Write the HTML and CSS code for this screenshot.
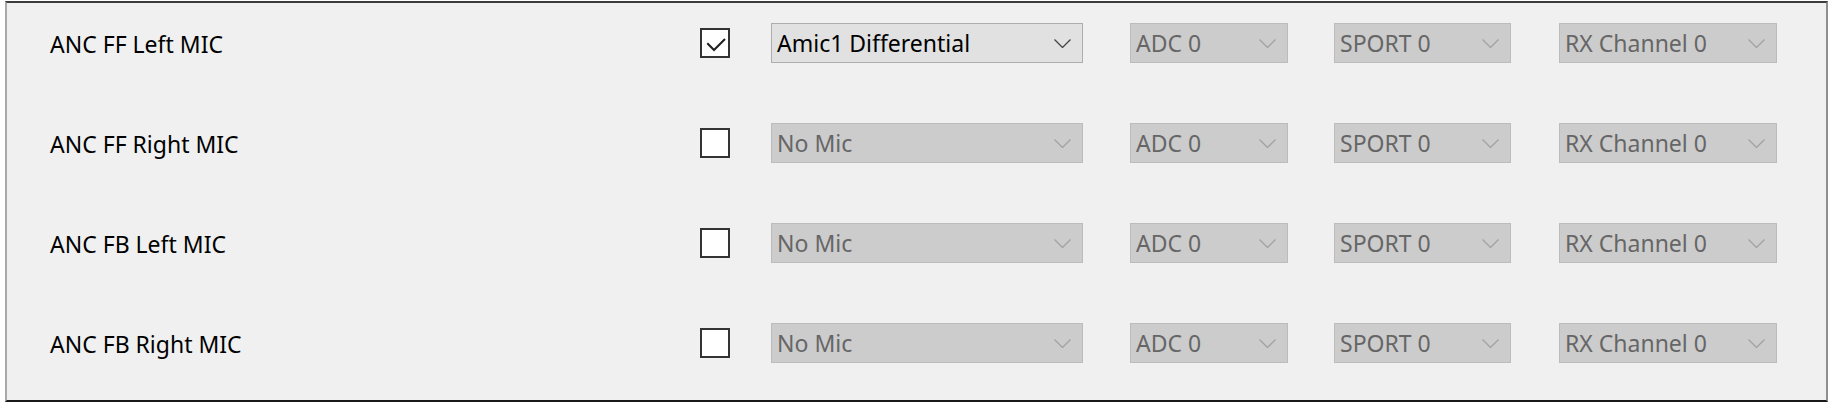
FILE: index.html
```html
<!DOCTYPE html>
<html>
<head>
<meta charset="utf-8">
<link rel="stylesheet" href="styles.css">
</head>
<body>
<div class="frame">
  <div class="row">
    <div class="label">ANC FF Left MIC</div>
    <div class="check on"><svg viewBox="0 0 26 26" width="26" height="26"><polyline points="5.3,13.3 12,20 23,9" fill="none" stroke="#1e1e1e" stroke-width="2"/></svg></div>
    <div class="combo w1 enabled"><span>Amic1 Differential</span><svg class="chev" viewBox="0 0 17 9" width="17" height="9"><polyline points="0.5,0.5 8.5,8.5 16.5,0.5" fill="none" stroke-width="1.3"/></svg></div>
    <div class="combo w2"><span>ADC 0</span><svg class="chev" viewBox="0 0 17 9" width="17" height="9"><polyline points="0.5,0.5 8.5,8.5 16.5,0.5" fill="none" stroke-width="1.3"/></svg></div>
    <div class="combo w3"><span>SPORT 0</span><svg class="chev" viewBox="0 0 17 9" width="17" height="9"><polyline points="0.5,0.5 8.5,8.5 16.5,0.5" fill="none" stroke-width="1.3"/></svg></div>
    <div class="combo w4"><span>RX Channel 0</span><svg class="chev" viewBox="0 0 17 9" width="17" height="9"><polyline points="0.5,0.5 8.5,8.5 16.5,0.5" fill="none" stroke-width="1.3"/></svg></div>
  </div>
  <div class="row">
    <div class="label">ANC FF Right MIC</div>
    <div class="check"></div>
    <div class="combo w1"><span>No Mic</span><svg class="chev" viewBox="0 0 17 9" width="17" height="9"><polyline points="0.5,0.5 8.5,8.5 16.5,0.5" fill="none" stroke-width="1.3"/></svg></div>
    <div class="combo w2"><span>ADC 0</span><svg class="chev" viewBox="0 0 17 9" width="17" height="9"><polyline points="0.5,0.5 8.5,8.5 16.5,0.5" fill="none" stroke-width="1.3"/></svg></div>
    <div class="combo w3"><span>SPORT 0</span><svg class="chev" viewBox="0 0 17 9" width="17" height="9"><polyline points="0.5,0.5 8.5,8.5 16.5,0.5" fill="none" stroke-width="1.3"/></svg></div>
    <div class="combo w4"><span>RX Channel 0</span><svg class="chev" viewBox="0 0 17 9" width="17" height="9"><polyline points="0.5,0.5 8.5,8.5 16.5,0.5" fill="none" stroke-width="1.3"/></svg></div>
  </div>
  <div class="row">
    <div class="label">ANC FB Left MIC</div>
    <div class="check"></div>
    <div class="combo w1"><span>No Mic</span><svg class="chev" viewBox="0 0 17 9" width="17" height="9"><polyline points="0.5,0.5 8.5,8.5 16.5,0.5" fill="none" stroke-width="1.3"/></svg></div>
    <div class="combo w2"><span>ADC 0</span><svg class="chev" viewBox="0 0 17 9" width="17" height="9"><polyline points="0.5,0.5 8.5,8.5 16.5,0.5" fill="none" stroke-width="1.3"/></svg></div>
    <div class="combo w3"><span>SPORT 0</span><svg class="chev" viewBox="0 0 17 9" width="17" height="9"><polyline points="0.5,0.5 8.5,8.5 16.5,0.5" fill="none" stroke-width="1.3"/></svg></div>
    <div class="combo w4"><span>RX Channel 0</span><svg class="chev" viewBox="0 0 17 9" width="17" height="9"><polyline points="0.5,0.5 8.5,8.5 16.5,0.5" fill="none" stroke-width="1.3"/></svg></div>
  </div>
  <div class="row">
    <div class="label">ANC FB Right MIC</div>
    <div class="check"></div>
    <div class="combo w1"><span>No Mic</span><svg class="chev" viewBox="0 0 17 9" width="17" height="9"><polyline points="0.5,0.5 8.5,8.5 16.5,0.5" fill="none" stroke-width="1.3"/></svg></div>
    <div class="combo w2"><span>ADC 0</span><svg class="chev" viewBox="0 0 17 9" width="17" height="9"><polyline points="0.5,0.5 8.5,8.5 16.5,0.5" fill="none" stroke-width="1.3"/></svg></div>
    <div class="combo w3"><span>SPORT 0</span><svg class="chev" viewBox="0 0 17 9" width="17" height="9"><polyline points="0.5,0.5 8.5,8.5 16.5,0.5" fill="none" stroke-width="1.3"/></svg></div>
    <div class="combo w4"><span>RX Channel 0</span><svg class="chev" viewBox="0 0 17 9" width="17" height="9"><polyline points="0.5,0.5 8.5,8.5 16.5,0.5" fill="none" stroke-width="1.3"/></svg></div>
  </div>
</div>
</body>
</html>
```
FILE: styles.css
```css
html, body {
  margin: 0;
  padding: 0;
  background: #ffffff;
}
body {
  padding: 1px 0 0 5px;
  font-family: "Noto Sans", "Open Sans", sans-serif;
  font-size: 23px;
}
.frame {
  box-sizing: border-box;
  width: 1823px;
  height: 401px;
  background: #f0f0f0;
  border-top: 2px solid #3c3c3c;
  border-left: 2px solid #a9a9a9;
  border-right: 2px solid #8e8e8e;
  border-bottom: 2px solid #1a1a1a;
  padding: 20px 0 0 43px;
  display: flex;
  flex-direction: column;
  gap: 60px;
}
.row {
  display: flex;
  align-items: center;
  height: 40px;
}
.label {
  width: 650px;
  color: #000;
  padding-top: 2px;
}
.check {
  box-sizing: border-box;
  width: 30px;
  height: 30px;
  border: 2px solid #333333;
  background: #ffffff;
  margin-right: 41px;
  display: flex;
}
.combo {
  box-sizing: border-box;
  height: 40px;
  border: 1px solid #bcbcbc;
  background: #cccccc;
  color: #666666;
  display: flex;
  align-items: center;
  justify-content: space-between;
  padding: 0 11px 0 5px;
}
.combo .chev {
  stroke: #a2a2a2;
}
.combo.enabled {
  background: #e1e1e1;
  border-color: #adadad;
  color: #000;
}
.combo.enabled .chev {
  stroke: #444444;
}
.w1 { width: 312px; margin-right: 47px; }
.w2 { width: 158px; margin-right: 46px; }
.w3 { width: 177px; margin-right: 48px; }
.w4 { width: 218px; }
```
